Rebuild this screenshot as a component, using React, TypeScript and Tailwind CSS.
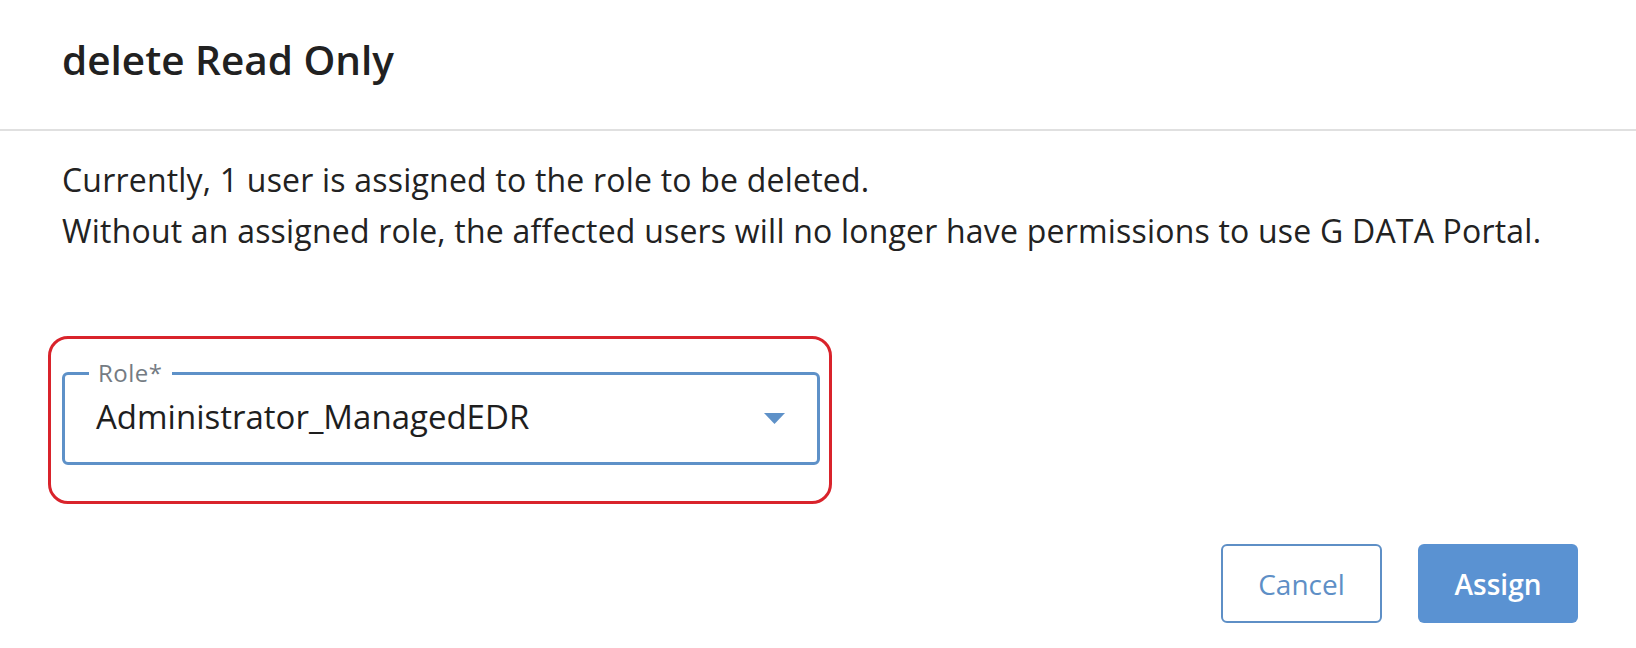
export default function App() {
  return (
    <div className="min-h-[648px] w-full bg-white text-[#222222] font-['Open_Sans','Noto_Sans',sans-serif]">
      {/* header */}
      <div className="flex h-[131px] items-center border-b-2 border-[#e0e0e0] px-[62px] pb-[9px]">
        <h1 className="text-[40.5px] font-semibold text-[#212121]">delete Read Only</h1>
      </div>

      <div className="px-[62px] pt-[23px]">
        <p className="text-[32px] leading-[51px] tracking-[0.2px]">
          Currently, 1 user is assigned to the role to be deleted.
          <br />
          Without an assigned role, the affected users will no longer have permissions to use G DATA Portal.
        </p>

        {/* highlighted field */}
        <div className="-ml-[14px] mt-[80px] w-[784px] rounded-[20px] border-[3px] border-[#d9232b] pb-[36px] pl-[11px] pr-[9px] pt-[33px]">
          <div className="relative flex h-[93px] items-center rounded-[6px] border-[3px] border-[#5e91c8] pb-[3px] pl-[31px] pr-[32px]">
            <span className="absolute -top-[17px] left-[24px] bg-white px-[9px] text-[24px] leading-[30px] tracking-[0.5px] text-[#747b83]">
              Role*
            </span>
            <span className="flex-1 text-[33px] text-[#1e1e1e]">Administrator_ManagedEDR</span>
            <svg width="21" height="11" viewBox="0 0 21 11" className="mt-[2px]">
              <path d="M0 0 H21 L10.5 11 Z" fill="#5e91c8" />
            </svg>
          </div>
        </div>

        {/* actions */}
        <div className="mt-[40px] flex justify-end gap-[36px]">
          <button className="h-[79px] w-[161px] rounded-[6px] border-2 border-[#5e8fc6] bg-white text-[28px] text-[#5e8fc6]">
            Cancel
          </button>
          <button className="mr-[-4px] h-[79px] w-[160px] rounded-[6px] bg-[#5a92d2] text-[28px] font-semibold text-white">
            Assign
          </button>
        </div>
      </div>
    </div>
  );
}
